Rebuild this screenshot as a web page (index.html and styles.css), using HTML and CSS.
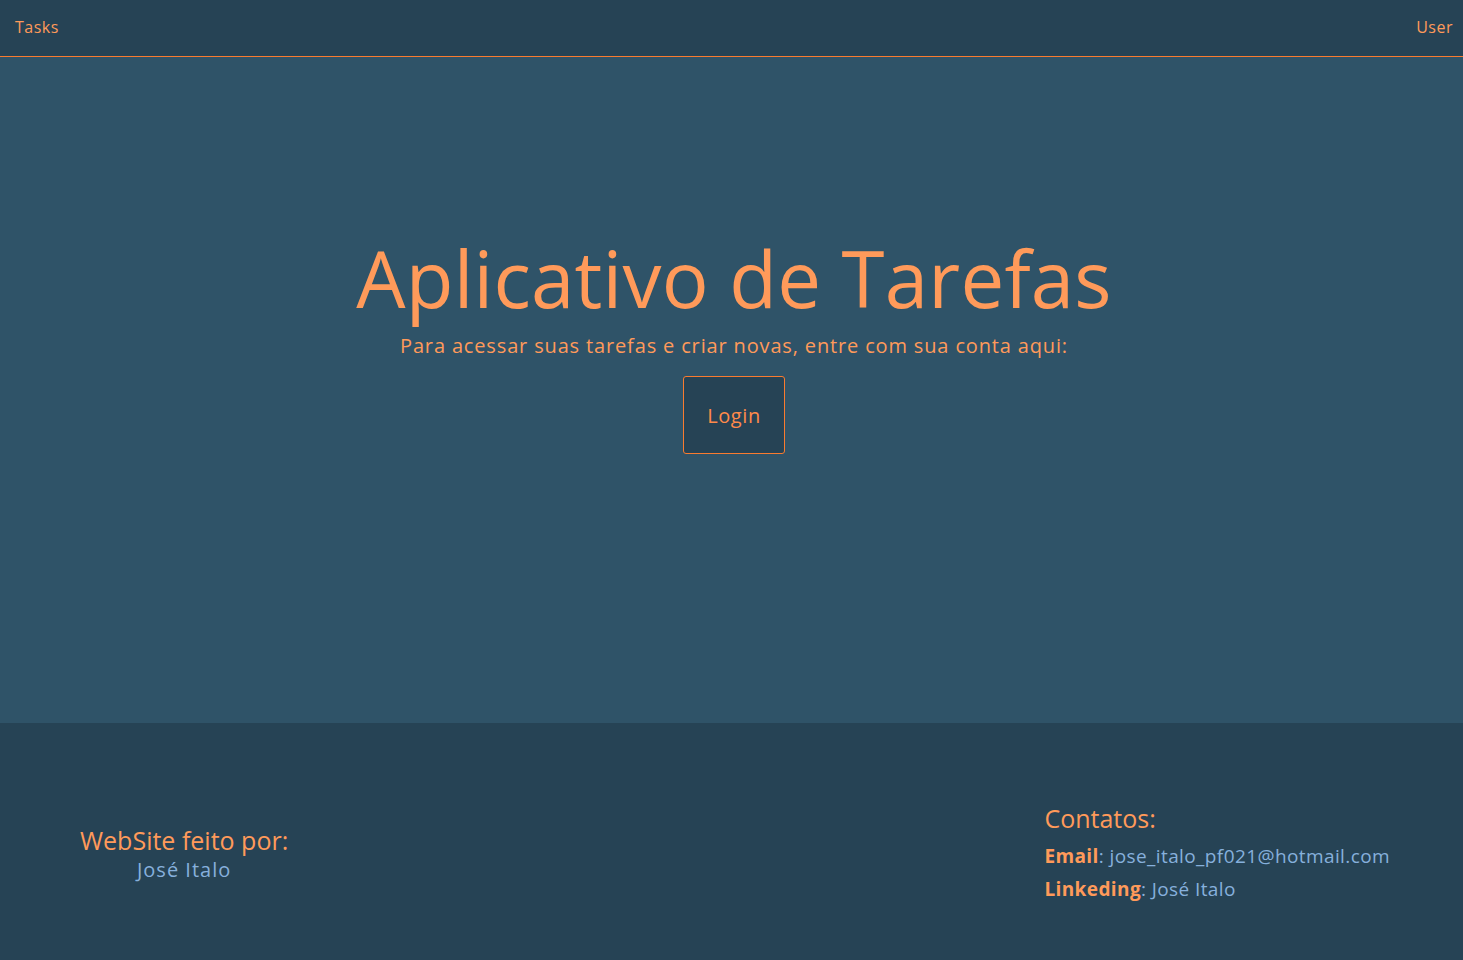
FILE: index.html
```html
<!DOCTYPE html>
<html lang="pt-BR">
<head>
<meta charset="utf-8">
<title>Tasks</title>
<link rel="stylesheet" href="styles.css">
</head>
<body>
<header class="topbar">
  <a class="nav-link" href="#">Tasks</a>
  <a class="nav-link" href="#">User</a>
</header>
<main class="hero">
  <h1 class="hero-title">Aplicativo de Tarefas</h1>
  <p class="hero-text">Para acessar suas tarefas e criar novas, entre com sua conta aqui:</p>
  <button class="login-btn" type="button">Login</button>
</main>
<footer class="footer">
  <div class="credits">
    <h2 class="footer-heading">WebSite feito por:</h2>
    <p class="footer-name">José Italo</p>
  </div>
  <div class="contacts">
    <h2 class="footer-heading">Contatos:</h2>
    <p class="contact-line"><strong class="contact-label">Email</strong>: jose_italo_pf021@hotmail.com</p>
    <p class="contact-line"><strong class="contact-label">Linkeding</strong>: José Italo</p>
  </div>
</footer>
</body>
</html>
```
FILE: styles.css
```css
* { box-sizing: border-box; }
html, body { margin: 0; padding: 0; }
body {
  font-family: "Open Sans", "DejaVu Sans", sans-serif;
  background: #2f5368;
  color: #ff9a5a;
}
.topbar {
  height: 57px;
  background: #264355;
  border-bottom: 1px solid #f97b2f;
  display: flex;
  justify-content: space-between;
  align-items: center;
  padding: 0 10px 2px 15px;
}
.nav-link {
  color: #ff9a5a;
  text-decoration: none;
  font-size: 16px;
  letter-spacing: 0.5px;
}
.hero {
  height: 666px;
  display: flex;
  flex-direction: column;
  align-items: center;
  padding-top: 175px;
  padding-left: 5px;
}
.hero-title {
  margin: 0;
  font-weight: 400;
  font-size: 78px;
  line-height: 92px;
  letter-spacing: 0.2px;
  color: #ff9a5a;
}
.hero-text {
  margin: 8px 0 16px;
  font-size: 20px;
  line-height: 28px;
  letter-spacing: 0.85px;
  color: #ff9a5a;
}
.login-btn {
  width: 102px;
  height: 78px;
  background: #264355;
  border: 1px solid #f97b2f;
  border-radius: 3px;
  color: #ff8a4a;
  font-family: inherit;
  font-size: 20px;
  letter-spacing: 0.6px;
}
.footer {
  height: 237px;
  background: #264355;
  display: flex;
  justify-content: space-between;
  align-items: center;
  padding: 24px 73px 0 80px;
}
.credits { text-align: center; }
.footer-heading {
  margin: 0;
  font-weight: 400;
  font-size: 25px;
  line-height: 32px;
  color: #ff9a5a;
}
.footer-name {
  margin: 0;
  font-size: 20px;
  line-height: 28px;
  letter-spacing: 1px;
  color: #86b0dc;
}
.contacts .footer-heading { margin-bottom: 6px; }
.contact-line {
  margin: 0;
  font-size: 19px;
  line-height: 33px;
  letter-spacing: 0.4px;
  color: #86b0dc;
}
.contact-label {
  font-weight: 700;
  color: #ff9a5a;
}
```
